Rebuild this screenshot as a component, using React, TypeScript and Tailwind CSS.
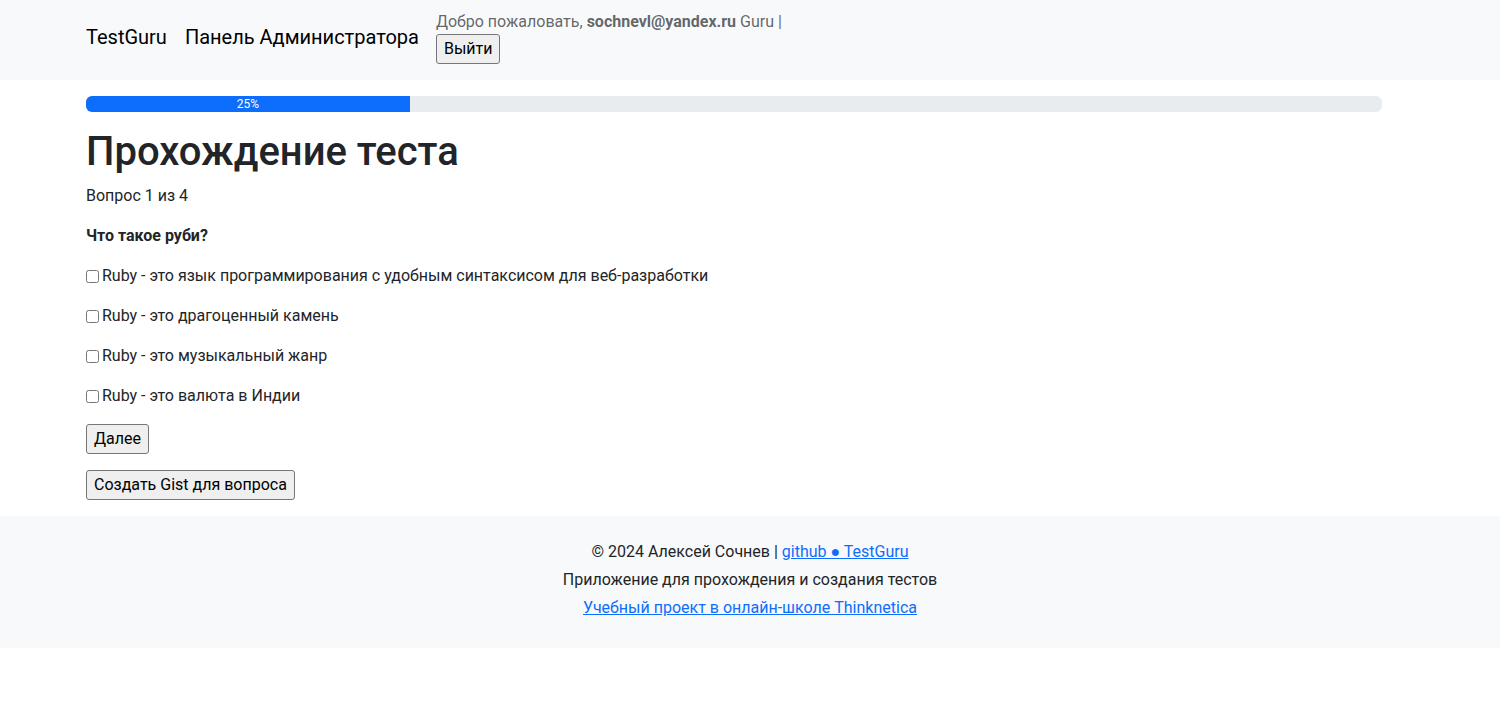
import React from "react";

const FONT = { fontFamily: 'Roboto, "Noto Sans", sans-serif' };

function Btn({ children }: { children: React.ReactNode }) {
  return (
    <button className="bg-[#efefef] border border-[#767676] rounded-[3px] px-[7px] py-[2px] text-[16px] leading-[24px] text-black">
      {children}
    </button>
  );
}

const answers = [
  "Ruby - это язык программирования с удобным синтаксисом для веб-разработки",
  "Ruby - это драгоценный камень",
  "Ruby - это музыкальный жанр",
  "Ruby - это валюта в Индии",
];

export default function App() {
  return (
    <div style={FONT} className="text-[16px] leading-[24px] text-[#212529] bg-white min-h-[717px]">
      <nav className="bg-[#f8f9fa] h-[80px]">
        <div className="pl-[86px] flex items-start pt-[10px]">
          <a className="mt-[12px] text-[20px] leading-[30px] text-black mr-[18px]">TestGuru</a>
          <a className="mt-[12px] text-[20px] leading-[30px] text-black mr-[17px]">Панель Администратора</a>
          <div className="flex flex-col items-start text-[rgba(33,37,41,0.7)]">
            <span>
              Добро пожаловать, <b className="font-bold">sochnevl@yandex.ru</b> Guru |
            </span>
            <Btn>Выйти</Btn>
          </div>
        </div>
      </nav>
      <main className="pl-[86px] w-[1382px] pt-[16px] pb-[16px]">
        <div className="h-[16px] bg-[#e9ecef] rounded-[6px] overflow-hidden flex">
          <div className="w-[25%] bg-[#0d6efd] text-white text-[12px] leading-[16px] text-center">25%</div>
        </div>
        <h1 className="mt-[16px] mb-[8px] text-[40px] leading-[48px] font-medium">Прохождение теста</h1>
        <p className="mb-[16px]">Вопрос 1 из 4</p>
        <p className="mb-[16px] font-bold">Что такое руби?</p>
        {answers.map((a) => (
          <p key={a} className="mb-[16px] flex items-center">
            <input type="checkbox" className="m-0 mr-[3px] w-[13px] h-[13px]" />
            <span>{a}</span>
          </p>
        ))}
        <p className="mb-[16px]">
          <Btn>Далее</Btn>
        </p>
        <p>
          <Btn>Создать Gist для вопроса</Btn>
        </p>
      </main>
      <footer className="bg-[#f8f9fa] pt-[22px] pb-[26px] text-center leading-[28px]">
        <p>
          © 2024 Алексей Сочнев | <a className="text-[#0d6efd] underline">github ● TestGuru</a>
        </p>
        <p>Приложение для прохождения и создания тестов</p>
        <p>
          <a className="text-[#0d6efd] underline">Учебный проект в онлайн-школе Thinknetica</a>
        </p>
      </footer>
    </div>
  );
}
